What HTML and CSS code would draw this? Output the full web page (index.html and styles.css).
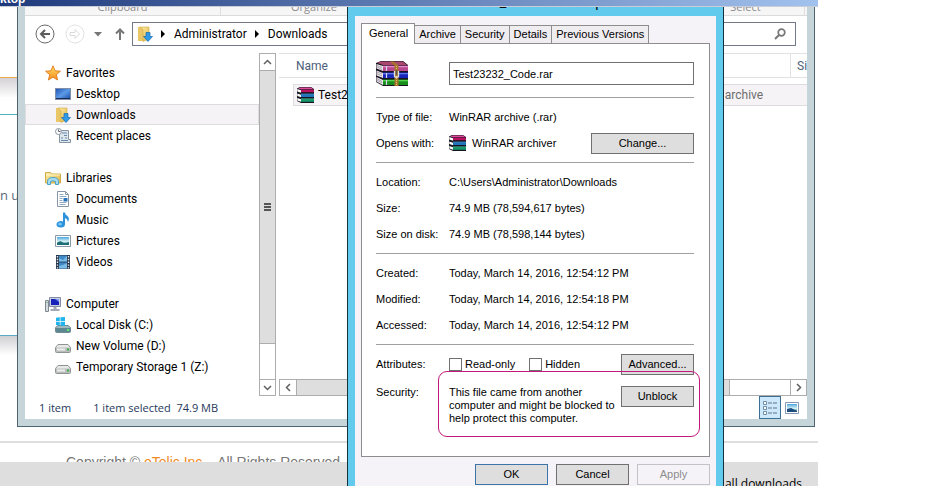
FILE: index.html
```html
<!DOCTYPE html>
<html lang="en">
<head>
<meta charset="utf-8">
<title>Desktop</title>
<link rel="stylesheet" href="styles.css">
</head>
<body>
<svg class="defs" aria-hidden="true">
  <defs>
    <linearGradient id="gFolder" x1="0" y1="0" x2="1" y2="1"><stop offset="0" stop-color="#fff0a8"/><stop offset="1" stop-color="#dfb345"/></linearGradient>
    <linearGradient id="gBlue" x1="0" y1="0" x2="1" y2="1"><stop offset="0" stop-color="#1d4fb4"/><stop offset=".5" stop-color="#5c9be6"/><stop offset="1" stop-color="#1748a8"/></linearGradient>
    <linearGradient id="gStar" x1="0" y1="0" x2="0" y2="1"><stop offset="0" stop-color="#ffe36a"/><stop offset="1" stop-color="#f58a1c"/></linearGradient>
    <linearGradient id="gSky" x1="0" y1="0" x2="0" y2="1"><stop offset="0" stop-color="#4aa6e0"/><stop offset=".55" stop-color="#d8f2f4"/><stop offset="1" stop-color="#156a72"/></linearGradient>
    <symbol id="star" viewBox="0 0 16 16"><path d="M8 .8l2.100 5 5.300.4-4.100 3.500 1.300 5.300L8 12.100 3.400 15l1.300-5.300L.6 6.200l5.300-.4z" fill="url(#gStar)" stroke="#e07818" stroke-width=".9"/></symbol>
    <symbol id="desktop" viewBox="0 0 16 16"><rect x=".5" y="2.5" width="15" height="11" fill="url(#gBlue)" stroke="#7f8ea6"/><path d="M1 12.500h14" stroke="#182c58"/></symbol>
    <symbol id="downloads" viewBox="0 0 16 16"><path d="M1 1h5l1 1v13H1z" fill="#e9c767"/><path d="M3 1h9v12l-6 2.500V3.500z" fill="url(#gFolder)" stroke="#d2a83c" stroke-width=".6"/><path d="M9 6.500h4v4h2.500L11 15.500 6.500 10.500H9z" fill="#2f9be6" stroke="#1569b4" stroke-width=".7"/></symbol>
    <symbol id="recent" viewBox="0 0 16 16"><path d="M4.500 2.500h9v9h2v3h-11z" fill="#dfe6ec" stroke="#8794a3"/><path d="M7 5h5M9 7.500h3M6 10h2m2 0h2M6 12.500h7" stroke="#6688ad"/><circle cx="3.500" cy="3.500" r="3" fill="#fff" stroke="#8794a3"/><path d="M3.500 1.500v2h2" fill="none" stroke="#667"/></symbol>
    <symbol id="libraries" viewBox="0 0 16 16"><path d="M.5 13V2.500h5l1 1.500h9v9z" fill="url(#gFolder)" stroke="#d0ac48"/><path d="M1 5h14" stroke="#fff6c8"/><path d="M2.500 14.500v-3q0-4 5.500-4t5.500 4v3h-3v-3q-2.500-1.500-5 0v3z" fill="#a5dcf2" stroke="#4aa2cc"/></symbol>
    <symbol id="documents" viewBox="0 0 16 16"><path d="M2.500.5h8l3 3v12h-11z" fill="#fff" stroke="#8795a5"/><path d="M10.500.5v3h3" fill="none" stroke="#8795a5"/><path d="M4.500 3.500h4M4.500 5.500h7M4.500 7.500h3M4.500 9.500h3M4.500 11.500h7M4.500 13.500h6" stroke="#93a9c2"/><path d="M8.500 7h4v3.500h-4z" fill="#2473b8"/></symbol>
    <symbol id="music" viewBox="0 0 16 16"><path d="M8 .5h2q0 2 2.500 3.500 2.500 2 .5 6-.3-3-3-4v6q0 3.500-4 3.500-4.500 0-4.500-3t4-3.500q1.500-.1 2.500.5z" fill="#2b93dc"/><ellipse cx="5" cy="12" rx="2" ry="1.500" fill="#77c4f3"/></symbol>
    <symbol id="pictures" viewBox="0 0 16 16"><path d="M.5 2.500h15v11H.5z" fill="#fff" stroke="#8a99a8"/><path d="M2 4h12v8H2z" fill="url(#gSky)"/><path d="M2 10q3-3 5-1t7 0v3H2z" fill="#1c6f78"/></symbol>
    <symbol id="videos" viewBox="0 0 16 16"><path d="M1 1h14v14H1z" fill="#263447"/><path d="M4 1.500h8v6H4zM4 8.500h8v6H4z" fill="#3e88c8"/><path d="M4 4l4 2 4-4v5.500H4zM4 12l4-1 4-2v5.500H4z" fill="#79bce6"/><path d="M2.500 2v13M13.500 2v13" stroke="#e9eef4" stroke-width="1.400" stroke-dasharray="1.400 1.400"/></symbol>
    <symbol id="computer" viewBox="0 0 16 16"><path d="M.5 4.500h3v11h-3z" fill="#d5dbdf" stroke="#7d8a92"/><path d="M1.500 6.500h1" stroke="#3d9a4c"/><path d="M4.500 1.500h11v9h-11z" fill="#c9cfe0" stroke="#848ba4"/><path d="M6 3h8v6H6z" fill="#1722b8"/><path d="M10 3h4v3z" fill="#7a9af0"/><path d="M8.500 11h3v2h3v2h-9v-2h3z" fill="#a3a9b4"/></symbol>
    <symbol id="drive" viewBox="0 0 16 16"><path d="M3 6.500h10l2.500 3v4q0 1-1 1h-13q-1 0-1-1v-4z" fill="#e7e9e8" stroke="#8d9492"/><path d="M1 9.500h14v4.500H1z" fill="#b9bebc"/><path d="M2 10.500h8v2H2z" fill="#eceeed"/><path d="M12 10.500h2v2h-2z" fill="#3cab48"/></symbol>
    <symbol id="sysdrive" viewBox="0 0 16 16"><path d="M3 8.500h10l2.500 2v4q0 1-1 1h-13q-1 0-1-1v-4z" fill="#9fb7bf" stroke="#6f8a92"/><path d="M1 11h14v4H1z" fill="#5d8791"/><path d="M12 12h2v2h-2z" fill="#5dea74"/><path d="M1 .8L4.800.3V4H1zM5.500.2L10 0v4H5.500zM1 4.800h3.800v3.700L1 8zM5.500 4.800H10V9l-4.500-.5z" fill="#20b4ee"/></symbol>
    <symbol id="books" viewBox="0 0 17 16"><path d="M0 1.500L3 0h11l3 2v14H4l-4-2z" fill="#15151f"/><path d="M1 1.500L3.500.5H14l2.500 1.700H4z" fill="#e04a9c"/><path d="M4 2.700h13v2.500H4z" fill="#b8125e"/><path d="M4 7.500h13v2.500H4z" fill="#1f74bd"/><path d="M4 6.700h13v.9H4z" fill="#45a3e6"/><path d="M4 12.300h13v2.500H4z" fill="#13976a"/><path d="M4 11.500h13v.9H4z" fill="#45cfa0"/><path d="M.3 2l3.700 1.200v2.600L.3 4.500zM.3 6.500L4 7.700v2.600L.3 9zM.3 11L4 12.200v2.600l-3.700-1.400z" fill="#fff"/></symbol>
    <symbol id="archive" viewBox="0 0 32 25"><path d="M0 2L5 0h22l5 4v21H7l-7-4z" fill="#1b1420"/><path d="M1 1.800L5 .5h21.500L31 4H7z" fill="#a9476f"/><path d="M7 4.500h25V10H7z" fill="#b8478f"/><path d="M7 5h25v1.300H7z" fill="#e28ac4"/><path d="M7 11.500h25V17H7z" fill="#1726b8"/><path d="M7 12h25v1.300H7z" fill="#5f78ee"/><path d="M7 18.500h25V24H7z" fill="#178d1c"/><path d="M7 19h25v1.300H7z" fill="#55d24e"/><path d="M.5 3L7 5v5L.5 7.500zM.5 9.500L7 12v5L.5 14.500zM.5 16L7 19v5L.5 20.500z" fill="#ece8ec"/><path d="M1 4.500l5 2M1 6l5 2.500M1 11l5 2M1 12.800L6 15M1 17.500l5 3M1 19l5 3" stroke="#8a8290" stroke-width=".7"/><path d="M10.500 5v5m0 2v5m0 2v5" stroke="#d8d4e8" stroke-width="1.200"/><path d="M14 .5h3.500l5 4V25h-4V4.500z" fill="#a8752c"/><path d="M20.500 5v20" stroke="#e9c06a" stroke-dasharray="1 1"/><path d="M18.500 10v5.500q2 1.500 4 0V10" fill="none" stroke="#dfe0e4" stroke-width="1.300"/><path d="M20.500 9v5" stroke="#555" stroke-width="1.300"/></symbol>
  </defs>
</svg>

<div class="screen">
  <header class="session"><span>Desktop</span></header>
  <div class="workspace">
    <div class="site">
      <div class="site-band orange"></div>
      <div class="site-band teal"></div>
      <p class="site-text">n u</p>
      <div class="site-band shaded"></div>
    </div>
    <footer class="copyright">Copyright © <a href="#">eTelic Inc.</a>&nbsp;&nbsp; All Rights Reserved.</footer>
    <div class="download-bar"><a href="#">Show all downloads</a></div>

    <section class="explorer" aria-label="Downloads">
      <div class="explorer-body">
        <div class="ribbon"><span class="group clip">Clipboard</span><span class="group org">Organize</span><span class="group sel">Select</span></div>
        <nav class="address-row">
          <button class="nav" aria-label="Back"><svg width="20" height="20" viewBox="0 0 20 20"><circle cx="10" cy="10" r="9" fill="#fff" stroke="#6a6a6a"/><path d="M15 10H6m4-4l-4 4 4 4" fill="none" stroke="#5c5c5c" stroke-width="2"/></svg></button>
          <button class="nav forward" aria-label="Forward"><svg width="20" height="20" viewBox="0 0 20 20"><circle cx="10" cy="10" r="9" fill="#fff" stroke="#e2e2e2"/><path d="M5 8.500h5v-3l4.500 4.500-4.500 4.500v-3H5z" fill="none" stroke="#dadada"/></svg></button>
          <button class="nav recent" aria-label="Recent locations"><svg width="8" height="5" viewBox="0 0 8 5"><path d="M0 0h8L4 4.500z" fill="#777"/></svg></button>
          <button class="nav" aria-label="Up"><svg width="10" height="12" viewBox="0 0 10 12"><path d="M5 12V2M1 5.500L5 1.500l4 4" fill="none" stroke="#777" stroke-width="2"/></svg></button>
          <div class="address">
            <svg width="16" height="16"><use href="#downloads"/></svg>
            <svg class="arrow" width="4" height="8" viewBox="0 0 4 8"><path d="M0 0l4 4-4 4z"/></svg>
            <a href="#">Administrator</a>
            <svg class="arrow" width="4" height="8" viewBox="0 0 4 8"><path d="M0 0l4 4-4 4z"/></svg>
            <a href="#">Downloads</a>
            <button class="search" aria-label="Search"><svg width="12" height="12" viewBox="0 0 12 12"><circle cx="7.500" cy="4.500" r="3.300" fill="none" stroke="#777" stroke-width="1.700"/><path d="M5 7L1 11" stroke="#777" stroke-width="2"/></svg></button>
          </div>
        </nav>
        <div class="panes">
          <ul class="tree">
            <li class="root"><a href="#"><svg><use href="#star"/></svg>Favorites</a></li>
            <li><a href="#"><svg><use href="#desktop"/></svg>Desktop</a></li>
            <li class="current"><a href="#"><svg><use href="#downloads"/></svg>Downloads</a></li>
            <li class="last"><a href="#"><svg><use href="#recent"/></svg>Recent places</a></li>
            <li class="root"><a href="#"><svg><use href="#libraries"/></svg>Libraries</a></li>
            <li><a href="#"><svg><use href="#documents"/></svg>Documents</a></li>
            <li><a href="#"><svg><use href="#music"/></svg>Music</a></li>
            <li><a href="#"><svg><use href="#pictures"/></svg>Pictures</a></li>
            <li class="last"><a href="#"><svg><use href="#videos"/></svg>Videos</a></li>
            <li class="root"><a href="#"><svg><use href="#computer"/></svg>Computer</a></li>
            <li><a href="#"><svg><use href="#sysdrive"/></svg>Local Disk (C:)</a></li>
            <li><a href="#"><svg><use href="#drive"/></svg>New Volume (D:)</a></li>
            <li><a href="#"><svg><use href="#drive"/></svg>Temporary Storage 1 (Z:)</a></li>
          </ul>
          <div class="vscroll">
            <button aria-label="Scroll up"><svg width="9" height="6" viewBox="0 0 9 6"><path d="M1 5l3.500-3.500L8 5" fill="none" stroke="#606060" stroke-width="1.500"/></svg></button>
            <div class="thumb"><svg width="7" height="8" viewBox="0 0 7 8"><path d="M0 1h7M0 4h7M0 7h7" stroke="#555" stroke-width="2"/></svg></div>
            <button class="end" aria-label="Scroll down"><svg width="9" height="6" viewBox="0 0 9 6"><path d="M1 1l3.500 3.500L8 1" fill="none" stroke="#606060" stroke-width="1.500"/></svg></button>
          </div>
          <div class="files">
            <table>
              <thead><tr><th class="name">Name</th><th class="type">Type</th><th class="size">Size</th></tr></thead>
              <tbody><tr><td><span class="file"><svg width="17" height="16"><use href="#books"/></svg>Test23232_Code.rar</span></td><td class="kind">WinRAR archive</td><td></td></tr></tbody>
            </table>
            <div class="hscroll">
              <button aria-label="Scroll left"><svg width="6" height="9" viewBox="0 0 6 9"><path d="M5 1L1.500 4.500 5 8" fill="none" stroke="#606060" stroke-width="1.500"/></svg></button>
              <div class="thumb"></div>
              <button class="end" aria-label="Scroll right"><svg width="6" height="9" viewBox="0 0 6 9"><path d="M1 1l3.500 3.500L1 8" fill="none" stroke="#606060" stroke-width="1.500"/></svg></button>
            </div>
          </div>
        </div>
        <div class="status">
          <span>1 item</span><span>1 item selected&nbsp; 74.9 MB</span>
          <div class="views">
            <button class="on" aria-label="Details view"><svg width="15" height="14" viewBox="0 0 15 14"><path d="M.5.5h3v3h-3zM.5 5.500h3v3h-3zM.5 10.500h3v3h-3z" fill="#fff" stroke="#6f8ca8"/><path d="M5 2h4m1 0h4M5 7h4m1 0h4M5 12h4m1 0h4" stroke="#5d7286"/></svg></button>
            <button aria-label="Thumbnail view"><svg width="14" height="12" viewBox="0 0 14 12"><path d="M.5.5h13v11H.5z" fill="#fff" stroke="#8497b4"/><path d="M2 2h10v8H2z" fill="url(#gSky)"/><path d="M2 7l4-1 6 3v1H2z" fill="#1b4c7e"/></svg></button>
          </div>
        </div>
      </div>
    </section>

    <section class="dialog" role="dialog" aria-label="Properties">
      <h1>Test23232_Code.rar Properties</h1>
      <form class="dialog-body">
        <div class="tabs" role="tablist">
          <button type="button" role="tab" class="active">General</button><button type="button" role="tab">Archive</button><button type="button" role="tab">Security</button><button type="button" role="tab">Details</button><button type="button" role="tab">Previous Versions</button>
        </div>
        <div class="panel">
          <div class="group title">
            <svg width="32" height="25"><use href="#archive"/></svg>
            <input type="text" value="Test23232_Code.rar" aria-label="File name">
          </div>
          <div class="group">
            <div class="row"><span>Type of file:</span><span>WinRAR archive (.rar)</span></div>
            <div class="row"><span>Opens with:</span><span class="app"><svg width="17" height="16"><use href="#books"/></svg>WinRAR archiver</span><button type="button" class="wide">Change...</button></div>
          </div>
          <div class="group">
            <div class="row"><span>Location:</span><span>C:\Users\Administrator\Downloads</span></div>
            <div class="row"><span>Size:</span><span>74.9 MB (78,594,617 bytes)</span></div>
            <div class="row"><span>Size on disk:</span><span>74.9 MB (78,598,144 bytes)</span></div>
          </div>
          <div class="group">
            <div class="row"><span>Created:</span><span>Today, March 14, 2016, 12:54:12 PM</span></div>
            <div class="row"><span>Modified:</span><span>Today, March 14, 2016, 12:54:18 PM</span></div>
            <div class="row"><span>Accessed:</span><span>Today, March 14, 2016, 12:54:12 PM</span></div>
          </div>
          <div class="group final">
            <div class="row"><span>Attributes:</span><span class="checks"><label><input type="checkbox">Read-only</label><label><input type="checkbox">Hidden</label></span><button type="button">Advanced...</button></div>
            <div class="row security"><span>Security:</span><span>This file came from another<br>computer and might be blocked to<br>help protect this computer.</span><button type="button">Unblock</button><i class="callout"></i></div>
          </div>
        </div>
        <div class="actions"><button type="button" class="default">OK</button><button type="button">Cancel</button><button type="button" disabled>Apply</button></div>
      </form>
    </section>
  </div>
</div>
</body>
</html>
```
FILE: styles.css
```css
* { box-sizing: border-box; }
body { margin: 0; background: #fff; font: 11px/14px "Open Sans", "Noto Sans", sans-serif; color: #000; overflow: hidden; }
button { margin: 0; padding: 0; font: inherit; color: inherit; border: 0; background: none; display: flex; align-items: center; justify-content: center; }
a { color: inherit; text-decoration: none; }
svg { flex: none; }
.defs { position: absolute; width: 0; height: 0; }

.screen { height: 100vh; margin-right: 110px; display: flex; flex-direction: column; }
.session { flex: none; height: 7px; overflow: hidden; display: flex; align-items: flex-end; background: linear-gradient(90deg, #1f3a7c, #a2c2ee); border-bottom: 1px solid #c9cdd8; color: #fff; font: bold 12px/13px "Liberation Sans", sans-serif; }
.session span { margin-left: -22px; }
.workspace { flex: 1; position: relative; overflow: hidden; display: flex; flex-direction: column; }

.site { flex: 1; width: 40%; padding-top: 70px; }
.site-band.orange { height: 37px; border-top: 1px solid #e9a94c; background: linear-gradient(#d3d1d4, #fff 20px); }
.site-band.teal { height: 72px; border-top: 1px solid #4fb3bd; }
.site-text { margin: 0; height: 149px; font: 13px/18px "Open Sans", sans-serif; color: #5b6b7c; }
.site-band.shaded { height: 20px; border-top: 1px solid #59a9c4; background: linear-gradient(#cfced2, #fff); }
.copyright { flex: none; height: 21px; padding: 11px 0 0 66px; border-top: 2px solid #dedede; overflow: hidden; font: 14px/16px "Liberation Sans", sans-serif; color: #777; }
.copyright a { color: #ef8b22; }
.download-bar { flex: none; height: 24px; overflow: hidden; padding: 13px 16px 0 0; background: #dedede; text-align: right; font: 12px/18px "Open Sans", sans-serif; }

.explorer { position: absolute; left: 17px; right: 3px; top: -21px; border: 1px solid #4f6473; padding: 0 7px 7px; background: #c5d5da; }
.explorer-body { background: #fff; }
.ribbon { display: flex; height: 29px; padding-top: 12px; background: #f7f6f7; border-bottom: 1px solid #dcdbdc; color: #8b8b8b; line-height: 16px; text-align: center; }
.group.clip { width: 196px; border-right: 1px solid #dedede; }
.group.org { width: 186px; }
.group.sel { width: 118px; margin-left: auto; margin-right: 2px; border-right: 1px solid #dedede; }
.address-row { display: flex; align-items: center; padding: 6px 11px 7px 10px; }
.nav.forward { margin-left: 10px; }
.nav.recent { margin: 0 13px 0 9px; }
.address { flex: 1; display: flex; align-items: center; height: 24px; margin-left: 7px; padding: 0 9px 0 4px; border: 1px solid #70788a; font: 12px/14px Roboto, sans-serif; }
.address .arrow { margin: 0 9px 0 8px; }
.search { margin-left: auto; }

.panes { display: flex; height: 343px; font: 12px/14px Roboto, sans-serif; }
.tree { width: 234px; margin: 0; padding: 9px 0 0; list-style: none; }
.tree li { height: 21px; padding-left: 29px; border: 1px solid transparent; }
.tree .root { padding-left: 19px; }
.tree .last { margin-bottom: 21px; }
.tree .current { background: #f5f3f5; border-color: #dedcde; }
.tree a { display: flex; align-items: center; gap: 5px; height: 19px; }
.tree svg { width: 16px; height: 16px; }
.vscroll { width: 17px; display: flex; flex-direction: column; border: 1px solid #adadad; }
.vscroll button { height: 16px; }
.vscroll .thumb { height: 274px; display: flex; align-items: center; justify-content: center; background: #dedede; border: solid #adadad; border-width: 1px 0; }
.vscroll .end { margin-top: auto; border-top: 1px solid #adadad; }
.files { flex: 1; min-width: 0; margin-left: 3px; display: flex; flex-direction: column; justify-content: space-between; overflow: hidden; }
.files table { width: 100%; table-layout: fixed; border-collapse: separate; border-spacing: 0; }
.files th { height: 25px; padding: 0 0 0 7px; border: solid #e2e2e2; border-width: 1px 0; font-weight: normal; text-align: left; color: #4c607a; overflow: hidden; }
.files .name { padding-left: 17px; }
.files .type { width: 118px; }
.files .size { width: 17px; border-left-width: 1px; padding-left: 6px; }
.files td { padding: 6px 0 0; height: 28px; background: linear-gradient(#dedcde, #dedcde) 0 6px / 100% 1px no-repeat, linear-gradient(transparent 6px, #f5f3f5 6px); border-bottom: 1px solid #dedcde; }
.files td:first-child { background: none; border: 0; padding-left: 14px; }
.file { display: flex; align-items: center; gap: 4px; height: 22px; padding-left: 3px; background: #f5f3f5; border: 1px solid #dedcde; border-right: 0; }
.files .kind { color: #6d6d6d; padding-left: 7px; }
.hscroll { display: flex; height: 17px; border: 1px solid #adadad; }
.hscroll button { width: 16px; }
.hscroll .thumb { width: 434px; background: #dedede; border: solid #adadad; border-width: 0 1px; }
.hscroll .end { margin-left: auto; border-left: 1px solid #adadad; }
.status { display: flex; align-items: center; height: 23px; padding-left: 14px; gap: 22px; color: #1e395b; }
.views { display: flex; margin: 0 4px 0 auto; align-self: stretch; }
.views button { width: 22px; }
.views .on { background: #cce8fa; border: 1px solid #3c6f93; }

.dialog { position: absolute; left: 347px; top: -22px; width: 377px; border: 1px solid #15313f; padding: 0 7px 7px; background: #62caec; font: 11px/13px "Liberation Sans", Arial, sans-serif; }
.dialog h1 { margin: 0; height: 30px; font: 15px/28px "Open Sans", sans-serif; text-align: center; }
.dialog-body { padding: 7px 6px 10px; background: #f5f3f8; }
.dialog button { height: 21px; background: #dedede; border: 1px solid #707070; }
.tabs { display: flex; align-items: flex-end; }
.dialog .tabs button { height: 18px; padding: 0 4px; background: #f0edf1; border-color: #8d8d8d; border-bottom: 0; }
.dialog .tabs button + button { border-left: 0; }
.dialog .tabs .active { height: 21px; padding: 0 6px 2px 7px; margin-bottom: -1px; background: #fff; position: relative; }
.panel { height: 414px; padding: 0 15px 0 14px; background: #fff; border: 1px solid #8d8d8d; }
.group { min-width: 0; }
.panel .group { padding: 6px 0; border-bottom: 1px solid #a0a0a0; }
.panel .title { display: flex; align-items: center; justify-content: space-between; height: 54px; padding-top: 12px; }
.title input { width: 245px; height: 23px; padding: 0 3px; border: 1px solid #707070; font: inherit; }
.row { display: flex; align-items: center; height: 26px; }
.row > span:first-child { flex: none; width: 73px; }
.app { display: flex; align-items: center; gap: 6px; }
.row button { margin-left: auto; flex: none; width: 73px; }
.row .wide { width: 103px; }
.panel .final { border: 0; }
.checks { display: flex; gap: 14px; }
.checks label { display: flex; align-items: center; gap: 3px; }
.checks input { appearance: none; width: 13px; height: 13px; margin: 0; border: 1px solid #707070; background: #fff; }
.security { position: relative; align-items: flex-start; height: auto; margin-top: 9px; }
.callout { position: absolute; left: 62px; right: -6px; top: -15px; height: 66px; border: 1px solid #c2187a; border-radius: 9px; pointer-events: none; }
.actions { display: flex; justify-content: flex-end; gap: 8px; padding-top: 7px; }
.actions button { width: 73px; }
.dialog .actions .default { border-color: #3c74a8; }
.dialog .actions button:disabled { color: #8d8d8d; background: #f5f3f8; border-color: #c4c2c6; }
```
